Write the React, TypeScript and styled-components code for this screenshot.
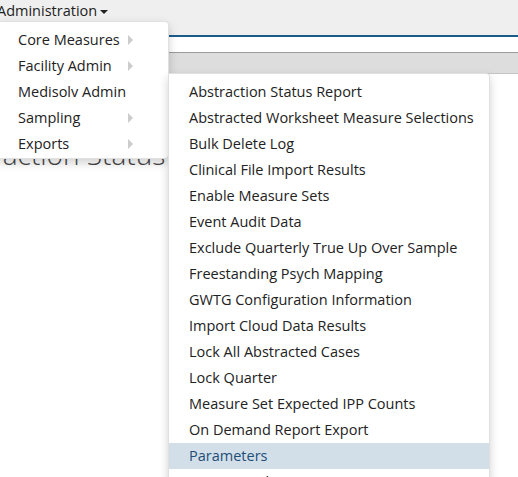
import React from "react";
import styled, { createGlobalStyle } from "styled-components";

const GlobalStyle = createGlobalStyle`
  html, body {
    margin: 0;
    padding: 0;
    background: #ffffff;
    overflow: hidden;
  }
  body {
    font-family: "Open Sans", "Liberation Sans", sans-serif;
    font-size: 13.5px;
    color: #333333;
  }
`;

const Page = styled.div`
  width: 518px;
  height: 477px;
  position: relative;
  overflow: hidden;
`;

const NavBar = styled.div`
  height: 35px;
  background: #efefef;
  border-bottom: 2px solid #1b5b8c;
  display: flex;
  align-items: flex-start;
`;

const NavItem = styled.div`
  position: relative;
  margin-left: -3px;
  height: 21px;
  display: flex;
  align-items: center;
  font-size: 14.5px;
  color: #222222;
`;

const Caret = styled.span`
  display: inline-block;
  margin-left: 3px;
  margin-top: 2px;
  border-top: 4px solid #222222;
  border-left: 4px solid transparent;
  border-right: 4px solid transparent;
`;

const WhiteBand = styled.div`
  height: 15px;
  border-bottom: 1px solid #9a9a9a;
`;

const GrayBand = styled.div`
  height: 20px;
  background: #dddddd;
  border-bottom: 1px solid #c4c4c4;
`;

const Heading = styled.h1`
  margin: 61px 0 0 -64px;
  font-size: 28px;
  font-weight: 300;
  color: #444444;
  white-space: nowrap;
`;

const Menu = styled.ul<{ $width: number }>`
  position: absolute;
  list-style: none;
  margin: 0;
  width: ${(p) => p.$width}px;
  background: #ffffff;
  border: 1px solid rgba(0, 0, 0, 0.12);
  border-radius: 4px;
  box-shadow: 0 4px 10px rgba(0, 0, 0, 0.18);
  z-index: 10;
`;

const RootMenu = styled(Menu)`
  top: 21px;
  left: 0;
  padding: 5px 0 1px;
`;

const SubMenu = styled(Menu)`
  top: -6px;
  left: 100%;
  border-radius: 0 4px 4px 4px;
  padding: 5px 0;
`;

const Item = styled.li<{ $active?: boolean }>`
  position: relative;
  height: 26px;
  line-height: 26px;
  padding: 0 20px;
  white-space: nowrap;
  color: ${(p) => (p.$active ? "#1f4d78" : "#222222")};
  background: ${(p) => (p.$active ? "#d2dfe8" : "transparent")};
`;

const Arrow = styled.span`
  position: absolute;
  left: 130px;
  top: 8px;
  border-left: 5px solid #cccccc;
  border-top: 5px solid transparent;
  border-bottom: 5px solid transparent;
`;

const rootItems = [
  { label: "Core Measures", arrow: true },
  { label: "Facility Admin", arrow: true },
  { label: "Medisolv Admin", arrow: false, open: true },
  { label: "Sampling", arrow: true },
  { label: "Exports", arrow: true },
];

const subItems = [
  "Abstraction Status Report",
  "Abstracted Worksheet Measure Selections",
  "Bulk Delete Log",
  "Clinical File Import Results",
  "Enable Measure Sets",
  "Event Audit Data",
  "Exclude Quarterly True Up Over Sample",
  "Freestanding Psych Mapping",
  "GWTG Configuration Information",
  "Import Cloud Data Results",
  "Lock All Abstracted Cases",
  "Lock Quarter",
  "Measure Set Expected IPP Counts",
  "On Demand Report Export",
  "Parameters",
  "Patient Lookup",
];

export default function App() {
  return (
    <Page>
      <GlobalStyle />
      <NavBar>
        <NavItem>
          Administration
          <Caret />
          <RootMenu $width={170}>
            {rootItems.map((it) => (
              <Item key={it.label}>
                {it.label}
                {it.arrow && <Arrow />}
                {it.open && (
                  <SubMenu $width={320}>
                    {subItems.map((s) => (
                      <Item key={s} $active={s === "Parameters"}>
                        {s}
                      </Item>
                    ))}
                  </SubMenu>
                )}
              </Item>
            ))}
          </RootMenu>
        </NavItem>
      </NavBar>
      <WhiteBand />
      <GrayBand />
      <Heading>Abstraction Status Report</Heading>
    </Page>
  );
}
